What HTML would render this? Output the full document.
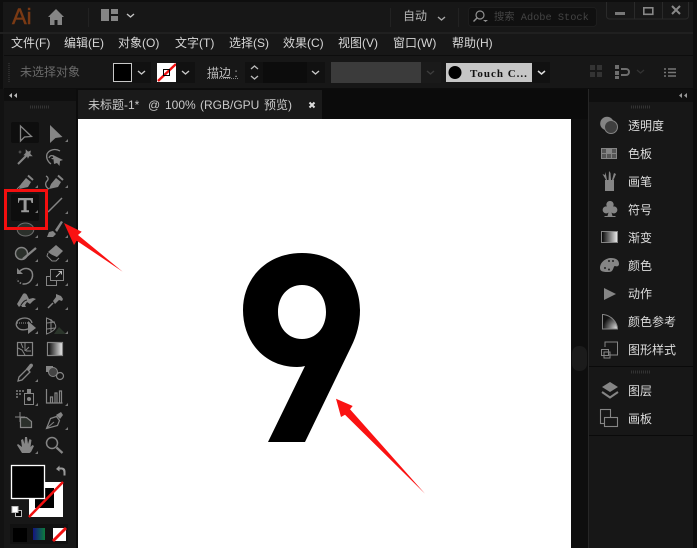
<!DOCTYPE html>
<html lang="zh">
<head>
<meta charset="utf-8">
<title>Illustrator</title>
<style>
html,body{margin:0;padding:0;width:697px;height:548px;overflow:hidden;background:#171717}
svg{display:block;position:absolute;left:0;top:0}
text{font-family:"Liberation Sans","Noto Sans CJK SC",sans-serif;font-size:12px;fill:#d6d6d6}
.p text{fill:#dcdcdc}
.i{fill:none;stroke:#858585;stroke-width:1.300}
.f{fill:#858585;stroke:none}
</style>
</head>
<body>
<svg width="697" height="548" viewBox="0 0 697 548" xmlns="http://www.w3.org/2000/svg">
<defs>
<linearGradient id="g" x1="0" x2="1"><stop offset="0" stop-color="#000"/><stop offset="1" stop-color="#eee"/></linearGradient>
<radialGradient id="r" cx="1" cy="1" r="1"><stop offset="0" stop-color="#eee"/><stop offset=".6" stop-color="#666"/><stop offset="1" stop-color="#111"/></radialGradient>
<linearGradient id="c" x1="0" x2="1"><stop offset="0" stop-color="#141480"/><stop offset="1" stop-color="#0d7d3c"/></linearGradient>
</defs>
<rect width="697" height="548" fill="#171717"/>
<rect x="0" y="0" width="3" height="548" fill="#0e0e0e"/>
<rect x="693" y="0" width="4" height="548" fill="#0e0e0e"/>
<rect x="0" y="0" width="697" height="2" fill="#0e0e0e"/>
<rect x="0" y="32" width="693" height="2" fill="#202020"/>

<!-- title bar -->
<text x="12" y="24" style="font-size:22px;fill:#7a3a14;stroke:#7a3a14;stroke-width:.5">Ai</text>
<path class="f" d="M56 9L48 17H50V25H54.500V20H57.500V25H62V17H64Z"/>
<rect x="88" y="8" width="1" height="19" fill="#222"/>
<rect x="101" y="9" width="8" height="12" fill="#858585"/><rect x="111" y="9" width="7" height="5" fill="#858585"/><rect x="111" y="16" width="7" height="5" fill="#858585"/>
<path d="M127 14l3.500 3 3.500-3" fill="none" stroke="#c4c4c4" stroke-width="1.400"/>
<rect x="390" y="8" width="1" height="19" fill="#222"/>
<text x="403" y="20" style="fill:#b4b4b4">自动</text>
<path d="M438 17l3.500 3 3.500-3" fill="none" stroke="#a8a8a8" stroke-width="1.400"/>
<rect x="458" y="8" width="1" height="19" fill="#222"/>
<rect x="468.500" y="7.500" width="128" height="19" rx="3" fill="#101010" stroke="#1d1d1d"/>
<circle cx="480" cy="15" r="4" fill="none" stroke="#909090" stroke-width="1.200"/><path d="M477 18l-3.500 3.500" stroke="#909090" stroke-width="1.400"/><path d="M483 20h5l-2.500 2z" fill="#909090"/>
<text x="494" y="20" style="font-size:10.300px;fill:#444;font-family:'Liberation Mono','Noto Sans CJK SC',monospace">搜索 Adobe Stock</text>
<path d="M606.500 2v14a3 3 0 0 0 3 3h76a3 3 0 0 0 3-3V2" fill="none" stroke="#2a2a2a"/>
<path d="M634.500 2v17M662.500 2v17" stroke="#2a2a2a"/>
<rect x="615" y="12" width="10" height="3" fill="#777"/>
<rect x="643.800" y="7.800" width="9" height="6.500" fill="none" stroke="#888" stroke-width="1.600"/>
<path d="M672 6l8 8M680 6l-8 8" stroke="#888" stroke-width="2"/>

<!-- menu -->
<text x="11" y="47">文件(F)</text>
<text x="64" y="47">编辑(E)</text>
<text x="118" y="47">对象(O)</text>
<text x="175" y="47">文字(T)</text>
<text x="229" y="47">选择(S)</text>
<text x="283" y="47">效果(C)</text>
<text x="338" y="47">视图(V)</text>
<text x="393" y="47">窗口(W)</text>
<text x="452" y="47">帮助(H)</text>

<!-- control bar -->
<rect x="4" y="55" width="689" height="1" fill="#0d0d0d"/>
<rect x="4" y="88" width="689" height="1" fill="#0d0d0d"/>
<path d="M9 63v20" stroke="#2b2b2b" stroke-width="2" stroke-dasharray="1 1"/>
<text x="20" y="76" style="fill:#6a6a6a">未选择对象</text>
<rect x="113.500" y="63.500" width="18" height="18" fill="#000" stroke="#c8c8c8"/>
<rect x="132" y="62" width="19" height="21" fill="#111"/>
<path d="M138 71l3.500 3 3.500-3" fill="none" stroke="#c8c8c8" stroke-width="1.400"/>
<rect x="157" y="63" width="19" height="19" fill="#fff"/>
<path d="M158 81L176 64" stroke="#f01010" stroke-width="2.400"/>
<rect x="163.500" y="69.500" width="6" height="6" fill="none" stroke="#000"/>
<rect x="176" y="62" width="19" height="21" fill="#111"/>
<path d="M182 71l3.500 3 3.500-3" fill="none" stroke="#c8c8c8" stroke-width="1.400"/>
<text x="207" y="77" style="fill:#bcbcbc">描边 :</text>
<path d="M207 78.500h32" stroke="#888" stroke-dasharray="1 1"/>
<rect x="245" y="62" width="18" height="21" fill="#111"/>
<path d="M251 69l3.500-3 3.500 3M251 76l3.500 3 3.500-3" fill="none" stroke="#bbb" stroke-width="1.300"/>
<rect x="263" y="62" width="44" height="21" fill="#0c0c0c"/>
<rect x="307" y="62" width="18" height="21" fill="#111"/>
<path d="M312 71l3.500 3 3.500-3" fill="none" stroke="#c8c8c8" stroke-width="1.400"/>
<rect x="331" y="62" width="90" height="21" fill="#3b3b3b"/>
<rect x="421" y="62" width="20" height="21" fill="#1a1a1a"/>
<path d="M427 71l3.500 3 3.500-3" fill="none" stroke="#3d3d3d" stroke-width="1.400"/>
<rect x="446" y="63" width="86" height="19" fill="#c6c6c6"/>
<circle cx="455" cy="72.500" r="6.500" fill="#000"/>
<text x="470" y="77" style="font-family:'Liberation Serif',serif;font-size:11px;font-weight:700;fill:#111;letter-spacing:1px">Touch C...</text>
<rect x="532" y="62" width="18" height="21" fill="#111"/>
<path d="M538 71l3.500 3 3.500-3" fill="none" stroke="#ddd" stroke-width="1.500"/>
<g fill="#333"><rect x="590" y="65" width="5" height="5"/><rect x="597" y="65" width="5" height="5"/><rect x="590" y="72" width="5" height="5"/><rect x="597" y="72" width="5" height="5"/></g>
<g fill="#6e6e6e"><rect x="615" y="65" width="4" height="4"/><rect x="615" y="71" width="4" height="4"/><rect x="615" y="76" width="4" height="3"/></g>
<path d="M621 69h5a3 3 0 0 1 0 6h-5" fill="none" stroke="#6e6e6e" stroke-width="2"/>
<path d="M637 70l3.500 3 3.500-3" fill="none" stroke="#333" stroke-width="1.300"/>
<path d="M668 69h8M668 72.500h8M668 76h8M664 69h2M664 72.500h2M664 76h2" stroke="#777" stroke-width="1.400"/>

<!-- document area -->
<rect x="0" y="89" width="697" height="459" fill="#0c0c0c"/>
<rect x="4" y="89" width="72" height="459" fill="#171717"/>
<rect x="4" y="89" width="72" height="12" fill="#0f0f0f"/>
<rect x="0" y="89" width="4" height="459" fill="#121212"/>
<rect x="76" y="89" width="2" height="459" fill="#0c0c0c"/>
<rect x="78" y="90" width="244" height="29" fill="#1a1a1a"/>
<rect x="322" y="90" width="267" height="29" fill="#0b0b0b"/>
<text x="88" y="109" style="fill:#c9c9c9">未标题-1*</text>
<text x="148" y="109" style="fill:#c9c9c9">@</text>
<text x="165" y="109" style="fill:#c9c9c9">100%</text>
<text x="200" y="109" style="fill:#c9c9c9">(RGB/GPU</text>
<text x="264" y="109" style="fill:#c9c9c9">预览)</text>
<path d="M309.500 102.500l5 5M314.500 102.500l-5 5" stroke="#ddd" stroke-width="2"/>
<rect x="78" y="119" width="493" height="429" fill="#fff"/>
<rect x="571" y="119" width="18" height="429" fill="#0e0e0e"/>
<rect x="572" y="346" width="15" height="25" rx="7" fill="#1b1b1b"/>

<!-- right panel -->
<rect x="589" y="89" width="104" height="459" fill="#171717"/>
<rect x="589" y="89" width="104" height="13" fill="#0f0f0f"/>
<rect x="588" y="89" width="1" height="459" fill="#262626"/>
<path d="M682 93l-3 2.500 3 2.500zM687 93l-3 2.500 3 2.500z" fill="#999"/>
<path d="M12 93l-3 2.500 3 2.500zM17 93l-3 2.500 3 2.500z" fill="#bbb"/>
<path d="M30 107h19" stroke="#333" stroke-width="3" stroke-dasharray="1 1"/>
<path d="M631 107h19" stroke="#333" stroke-width="3" stroke-dasharray="1 1"/>
<path d="M631 372h19" stroke="#333" stroke-width="3" stroke-dasharray="1 1"/>
<rect x="589" y="366" width="104" height="1" fill="#0a0a0a"/>
<rect x="589" y="435" width="104" height="1" fill="#0a0a0a"/>

<g class="p">
<text x="628" y="130">透明度</text>
<text x="628" y="158">色板</text>
<text x="628" y="186">画笔</text>
<text x="628" y="214">符号</text>
<text x="628" y="242">渐变</text>
<text x="628" y="270">颜色</text>
<text x="628" y="298">动作</text>
<text x="628" y="326">颜色参考</text>
<text x="628" y="354">图形样式</text>
<text x="628" y="395">图层</text>
<text x="628" y="423">画板</text>
</g>

<!-- right icons -->
<circle cx="607" cy="123.500" r="6.800" fill="#858585"/><circle cx="611" cy="127" r="6.500" fill="#3f3f3f" stroke="#858585"/>
<rect x="601.500" y="148.500" width="15" height="10" fill="#555" stroke="#858585"/><path d="M601 153.500h16M606.500 149v10M611.500 149v10" stroke="#858585"/><rect x="606.500" y="149" width="5" height="4.500" fill="#858585"/>
<path class="f" d="M605 180h9v11h-9zM606 180l-3.500-6 2.500 1 .5-3 1.500 8zM608.500 180l.5-9 1.500 2 .5 7zM612 180l2-7 2 1-2.500 6z"/>
<path class="f" d="M610 201a3.500 3.500 0 0 1 3 5.500a3.500 3.500 0 1 1-1.500 6l1 3.500h3v1h-11v-1h3l1-3.500a3.500 3.500 0 1 1-1.500-6a3.500 3.500 0 0 1 3-5.500z"/>
<rect x="601.500" y="231.500" width="16" height="11" fill="url(#g)" stroke="#858585"/>
<path class="f" d="M600 268c0-6 6-10 11-10 5 0 8 2 8 6 0 2-2 3-4 2-2 0-1 6-6 6-5 0-9 0-9-4z"/>
<circle cx="605" cy="268" r="1" fill="#222"/><circle cx="609" cy="269.500" r="1" fill="#222"/><circle cx="613" cy="261" r="1" fill="#222"/><circle cx="609" cy="261" r="1" fill="#222"/>
<path class="f" d="M604 288l12 6-12 6z"/>
<path d="M602.500 314.500h1c8 1 14 8 14 14.500h-15z" fill="url(#r)" stroke="#858585"/>
<path class="i" d="M605 347v-5h12.500V355H609" style="stroke-width:1"/><rect x="601.500" y="349.500" width="7" height="6" fill="none" stroke="#858585"/><rect x="604" y="352" width="6" height="6" fill="none" stroke="#858585"/>
<path class="f" d="M610 382l8 5-8 5-8-5z"/><path d="M602 392l8 5.500 8-5.500" fill="none" stroke="#858585" stroke-width="2"/>
<rect x="600.500" y="409.500" width="10" height="14" fill="none" stroke="#858585" stroke-width="1.100"/><rect x="604.500" y="417.500" width="13" height="9" fill="#171717" stroke="#858585" stroke-width="1.100"/>

<!-- left tools -->
<rect x="11" y="122" width="28" height="21" rx="2" fill="#0e0e0e"/>
<path class="i" d="M20.500 126v15l4-4 7-.5z"/>
<path class="f" d="M50 125l12.500 12-7 1-5.500 5z"/>

<path d="M18 164l11-11" stroke="#858585" stroke-width="2"/><path d="M26 150l2 2 2.500-1-.5 3 2 2-3 0-1 2-1-2.500-3-.5 2-2zM20 150.500v3M18.500 152h3M32 149.500h0" fill="#858585" stroke="#858585" stroke-width=".6"/>
<path class="i" d="M51 164c-4-3-5-7-4-10 2-4 8-6 13-3"/><path class="f" d="M53 155l10 5-3 1-.5 5-2.500-3-3 1z"/><path class="i" d="M49 158c1-3 4-3 5-1 0 2-2 2-2 1"/>

<path class="f" d="M26 178l5 4-3 5-9 2 2-5zM27 175l5 4"/><path d="M28 175.500l5 4.500" stroke="#858585" stroke-width="2"/><path d="M17 189l5-5" stroke="#858585"/>
<path class="f" d="M56 178l5 4-3 5-9 2 2-5z"/><path d="M58 175.500l5 4.500" stroke="#858585" stroke-width="2"/><path class="i" d="M49 189c-4-2-4-6-2-8s1-4-1-5"/>

<rect x="11" y="194" width="28" height="27" rx="2" fill="#0e0e0e"/>
<path d="M18 198h15v5h-1.400l-1-2.800h-4v10h2.400v2h-7.800v-2h2.400v-10h-4l-1 2.800H18z" fill="#9a9a9a"/>
<path d="M48 212l14-14" stroke="#858585" stroke-width="1.500"/>

<ellipse cx="25.500" cy="229.500" rx="8.300" ry="6.500" fill="#2b302b" stroke="#6e6e6e"/>
<path class="f" d="M47 237l2-5 4-1 3 3-3 3zM55 230l6-9 2 1-6 10z"/>

<circle cx="21.500" cy="253.500" r="6" fill="#2b302b" stroke="#858585" stroke-width="1.400"/><path d="M23 259l13-11" stroke="#858585" stroke-width="2.300"/>
<path class="f" d="M56 245l7 6-7 7-8-6z"/><path d="M48 253l-1 3 5 5h4l3-3" fill="#171717" stroke="#858585"/>

<path class="i" d="M20 271c4-4 10-3 12 1 2 6-2 12-8 12" style="stroke-width:1.500"/><path d="M24 284c-3 0-6-2-7-5" stroke="#858585" stroke-width="1.500" stroke-dasharray="1.500 1.500" fill="none"/><path class="f" d="M17 268v6h6z"/>
<rect x="46.500" y="276.500" width="10" height="9" fill="none" stroke="#858585"/><rect x="50.500" y="269.500" width="13" height="11" fill="#171717" stroke="#858585"/><path d="M56 277l5-5M58.500 271.500h3v3" stroke="#bbb" fill="none"/>

<path class="f" d="M17 304l6-10c1-1 3-1 4 1l2 4 4-1 3 1-3 2-3 3-3-2-2 3 1 2-4 0-1-2-2 2z"/><path d="M21 305c2-3 4-5 6-5" stroke="#171717" fill="none"/>
<path class="f" d="M56 294l5 2 2 3-1 2-3-1-4 4-2-3 3-4z"/><path d="M53 303l-5 5" stroke="#858585" stroke-width="1.500"/>

<path class="i" d="M31 327c-3 3-10 4-13 1-3-3-2-7 2-9 5-2 11-1 12 4"/><path d="M17 323h14" stroke="#999" stroke-dasharray="1 1"/><path class="f" d="M28 321l8 7-8 6z"/>
<path class="i" d="M46.500 318v16c3-1 7-3 9-6 1-3-1-7-9-10zM47 323l8-1M47 329l8-1M51 319l0 13" style="stroke-width:1"/><path d="M54 334h12l-7-7z" fill="#2b352b"/>

<rect x="17.500" y="342.500" width="15" height="13" fill="none" stroke="#858585" stroke-width="1.200"/><path d="M18 348l4 2 3 5M25 343v8M25 351l4-4M31 351h-5M21 343l2 5" stroke="#858585" fill="none"/>
<rect x="47.500" y="342.500" width="15" height="13" fill="url(#g)" stroke="#858585" stroke-width="1.200"/>

<path class="i" d="M18 381l1-4 8-8 3 3-8 8z"/><path class="f" d="M26 369l4-5c2-1 3 0 3 2l-4 5z"/>
<path class="f" d="M46 366h7v6h-7z"/><circle cx="53" cy="372" r="4.500" fill="#444" stroke="#858585"/><circle cx="60" cy="376" r="3.500" fill="#171717" stroke="#858585" stroke-width="1.200"/>

<g fill="#666"><rect x="16" y="390" width="2" height="2"/><rect x="19" y="390" width="2" height="2"/><rect x="22" y="390" width="2" height="2"/><rect x="16" y="393" width="2" height="2"/><rect x="19" y="393" width="2" height="2"/><rect x="16" y="396" width="2" height="2"/></g>
<rect x="24.500" y="393.500" width="9" height="11" fill="none" stroke="#858585"/><rect x="27" y="389" width="4" height="4" fill="#858585"/><circle cx="29" cy="399" r="2" fill="#858585"/>
<path d="M46.500 389v14h16M50.500 403v-6h2v6M55 403v-10h2v10M59.500 403v-12h2v12" fill="none" stroke="#858585" stroke-width="1.200"/>

<path d="M15 417h10M20 412v10" stroke="#858585" stroke-width="1" fill="none"/><path d="M20.500 417.500h6l5 4v6h-11z" fill="#2b302b" stroke="#858585" stroke-width="1.200"/>
<path class="i" d="M46.500 428.500l4-10 6-2 3 4-2 5z" style="stroke-width:1.200"/><path d="M47 428l7-6" stroke="#858585"/><path class="f" d="M56 415l5-3 2 3-3 4z"/>

<path class="f" d="M22 453l-5-8 1-1 4 3-1-7 2-1 1.500 5 .5-7h2l1 7 1.500-5 2 1-1 7 2-2 1.500 1-3 6-1.500 1z"/>
<circle cx="52" cy="443" r="5.500" fill="none" stroke="#858585" stroke-width="1.500"/><path d="M56.500 447.500l6 5.500" stroke="#858585" stroke-width="2.300"/>

<!-- corner ticks -->
<path fill="#777" d="M38 188h-3l3-3zM68 188h-3l3-3zM38 213h-3l3-3zM68 142h-3l3-3zM68 214h-3l3-3zM38 238h-3l3-3zM68 238h-3l3-3zM38 262h-3l3-3zM68 262h-3l3-3zM38 286h-3l3-3zM68 286h-3l3-3zM38 310h-3l3-3zM68 310h-3l3-3zM38 334h-3l3-3zM68 334h-3l3-3zM38 382h-3l3-3zM38 406h-3l3-3zM68 406h-3l3-3zM68 430h-3l3-3zM38 454h-3l3-3z"/>

<!-- fill / stroke -->
<rect x="29" y="482" width="34" height="35" fill="#fff"/>
<rect x="35" y="488" width="19" height="20" fill="#000"/>
<path d="M29 517L63 482" stroke="#f01010" stroke-width="2.500"/>
<rect x="11.500" y="465.500" width="33" height="33" fill="#000" stroke="#fff" stroke-width="1.300"/>
<path d="M56 469l3.500-3.500v2h2c3 0 4 2 4 4v4h-2v-3c0-2-1-3-2-3h-2v2z" fill="#999"/>
<rect x="15.500" y="510.500" width="6" height="6" fill="#000" stroke="#bbb"/><rect x="12" y="506.500" width="6" height="6" fill="#fff" stroke="#bbb"/>
<rect x="10" y="524" width="58" height="20" fill="#111"/>
<rect x="13" y="528" width="14" height="14" fill="#000"/>
<rect x="33" y="528" width="12" height="12" fill="url(#c)"/>
<rect x="53" y="528" width="13" height="13" fill="#fff"/><path d="M53 541l13-13" stroke="#f01010" stroke-width="3"/>

<!-- number 9 -->
<path fill="#000" fill-rule="evenodd" d="M302 253C266 253 243 279 243 310C243 342 265 367 297 367C300 367 303 366.500 305 366L268 442H305L351 347C357 335 360 323 360 310C360 279 338 253 302 253ZM302 285C316 285 326 296 326 312C326 328 316 339 302 339C288 339 278 328 278 312C278 296 288 285 302 285Z"/>

<!-- arrows -->
<path fill="#fa1212" d="M336 398.700L352.700 406L350 409.300L425 493.700L345 414.700L341 417Z"/>
<path fill="#fa1212" d="M64 223L81.700 231.700L78 235L122.700 271.700L76.700 240.700L74 245Z"/>
<rect x="5.500" y="190.500" width="41" height="38" fill="none" stroke="#f40f0f" stroke-width="3"/>
</svg>
</body>
</html>
